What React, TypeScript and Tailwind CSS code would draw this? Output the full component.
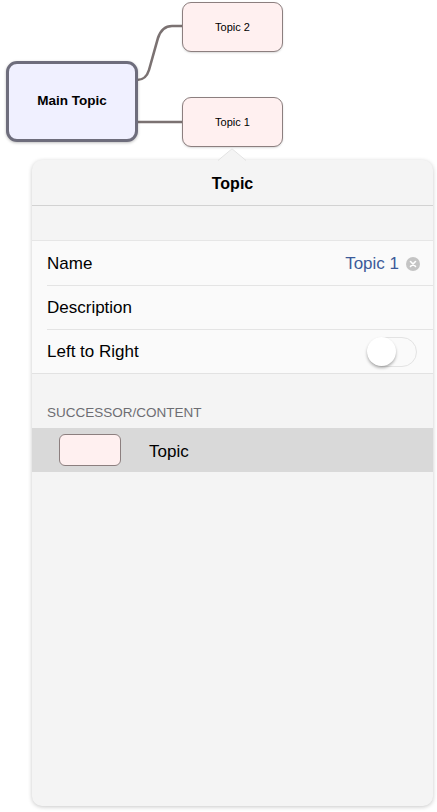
import React from "react";

function Node({ label, className }: { label: string; className: string }) {
  return (
    <div
      className={
        "absolute flex items-center justify-center bg-[#fff0f0] border-[1.5px] border-[#8c7f7f] rounded-[9px] text-[11px] text-black shadow-[0_1px_2px_rgba(0,0,0,0.15)] " +
        className
      }
    >
      {label}
    </div>
  );
}

export default function App() {
  return (
    <div
      className="w-[437px] h-[812px] bg-white overflow-hidden"
      style={{ fontFamily: '"Liberation Sans", Arial, sans-serif' }}
    >
      {/* mind map canvas */}
      <div className="relative h-[160px]">
        <svg className="absolute left-0 top-0" width="437" height="160">
          <path
            d="M137 80 Q146 80 149 70 L158 38 Q162 26 172 26 L183 26"
            fill="none"
            stroke="#7b7272"
            strokeWidth="2.6"
          />
          <path d="M137 122 L183 122" fill="none" stroke="#7b7272" strokeWidth="2.6" />
        </svg>
        <div className="absolute left-[6px] top-[61px] w-[132px] h-[81px] flex items-center justify-center bg-[#f0f0ff] border-[3px] border-[#6e6d7c] rounded-[11px] text-[13.5px] font-bold text-black shadow-[0_1px_3px_rgba(0,0,0,0.25)]">
          Main Topic
        </div>
        <Node label="Topic 2" className="left-[182px] top-[2px] w-[101px] h-[50px]" />
        <Node label="Topic 1" className="left-[182px] top-[97px] w-[101px] h-[50px]" />
      </div>

      {/* popover */}
      <div className="relative ml-[32px] w-[401px] h-[646px] bg-[#f4f4f4] rounded-[10px] shadow-[0_1px_4px_rgba(0,0,0,0.22)] flex flex-col">
        <svg className="absolute left-[186px] top-[-12px]" width="28" height="13">
          <path d="M0 13 L14 1 L28 13 Z" fill="#f4f4f4" />
          <path d="M0 12.5 L14 0.8 L28 12.5" fill="none" stroke="#e2e2e2" strokeWidth="1" />
        </svg>
        <div className="h-[46px] pt-[3px] flex items-center justify-center border-b border-[#d2d2d2] text-[16px] font-bold text-black">
          Topic
        </div>
        <div className="h-[35px] border-b border-[#e6e6e6]" />
        <div className="bg-[#fafafa] border-b border-[#e2e2e2]">
          <div className="h-[44px] pt-[1px] flex items-center pl-[15px] pr-[13px]">
            <span className="text-[17px] text-black">Name</span>
            <span className="ml-auto text-[17px] text-[#3c5a99]">Topic 1</span>
            <span className="ml-[7px] w-[14px] h-[14px] rounded-full bg-[#c4c4c4] flex items-center justify-center">
              <svg width="8" height="8" viewBox="0 0 8 8">
                <path d="M1.5 1.5 L6.5 6.5 M6.5 1.5 L1.5 6.5" stroke="white" strokeWidth="1.6" strokeLinecap="round" />
              </svg>
            </span>
          </div>
          <div className="ml-[15px] border-t border-[#e4e4e4]" />
          <div className="h-[43px] flex items-center pl-[15px]">
            <span className="text-[17px] text-black">Description</span>
          </div>
          <div className="ml-[15px] border-t border-[#e4e4e4]" />
          <div className="h-[43px] flex items-center pl-[15px] pr-[16px]">
            <span className="text-[17px] text-black">Left to Right</span>
            <div className="ml-auto w-[50px] h-[30px] rounded-full border border-[#e3e3e3] bg-[#fafafa] relative">
              <div className="absolute left-[-1px] top-[-0.5px] w-[29px] h-[29px] rounded-full bg-white shadow-[0_2px_3px_rgba(0,0,0,0.3)]" />
            </div>
          </div>
        </div>
        <div className="h-[54px] flex items-end pl-[15px] pb-[5px]">
          <span className="text-[13.5px] text-[#6d6d72] uppercase">Successor/Content</span>
        </div>
        <div className="h-[44px] bg-[#d9d9d9] flex items-center pl-[27px]">
          <div className="w-[62px] h-[32px] rounded-[6px] bg-[#fff0f0] border-[1.5px] border-[#8c7f7f]" />
          <span className="ml-[28px] mt-[3px] text-[17px] text-black">Topic</span>
        </div>
      </div>
    </div>
  );
}
